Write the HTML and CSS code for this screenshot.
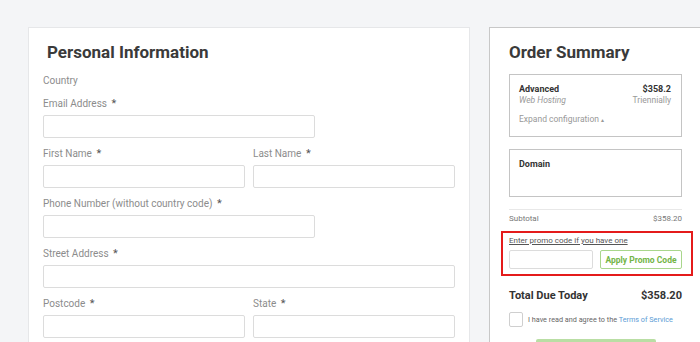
FILE: index.html
```html
<!DOCTYPE html>
<html lang="en">
<head>
  <meta charset="UTF-8">
  <meta name="viewport" content="width=device-width, initial-scale=1.0">
  <title>Checkout</title>
  <link rel="stylesheet" href="styles.css">
</head>
<body>
  <div class="checkout">
    <!-- Personal Information -->
    <section class="card personal">
      <h1>Personal Information</h1>

      <div class="field">
        <label>Country</label>
      </div>

      <div class="field wide">
        <label>Email Address <span class="req">*</span></label>
        <input type="text">
      </div>

      <div class="row">
        <div class="field">
          <label>First Name <span class="req">*</span></label>
          <input type="text">
        </div>
        <div class="field">
          <label>Last Name <span class="req">*</span></label>
          <input type="text">
        </div>
      </div>

      <div class="field wide">
        <label>Phone Number (without country code) <span class="req">*</span></label>
        <input type="text">
      </div>

      <div class="field">
        <label>Street Address <span class="req">*</span></label>
        <input type="text">
      </div>

      <div class="row">
        <div class="field">
          <label>Postcode <span class="req">*</span></label>
          <input type="text">
        </div>
        <div class="field">
          <label>State <span class="req">*</span></label>
          <input type="text">
        </div>
      </div>
    </section>

    <!-- Order Summary -->
    <aside class="card summary">
      <h1>Order Summary</h1>

      <div class="item">
        <div class="item-line">
          <span class="item-name">Advanced</span>
          <span class="item-price">$358.2</span>
        </div>
        <div class="item-line">
          <span class="item-group">Web Hosting</span>
          <span class="item-cycle">Triennially</span>
        </div>
        <div class="item-expand">Expand configuration <span class="caret">&#9652;</span></div>
      </div>

      <div class="item domain">
        <div class="item-name">Domain</div>
      </div>

      <div class="subtotal">
        <span>Subtotal</span>
        <span>$358.20</span>
      </div>

      <div class="promo">
        <a class="promo-link" href="#">Enter promo code if you have one</a>
        <div class="promo-form">
          <input type="text">
          <button class="promo-btn">Apply Promo Code</button>
        </div>
      </div>

      <div class="total">
        <span>Total Due Today</span>
        <span>$358.20</span>
      </div>

      <label class="agree">
        <span class="checkbox"></span>
        <span>I have read and agree to the <a href="#">Terms of Service</a></span>
      </label>

      <button class="checkout-btn"></button>
    </aside>
  </div>
</body>
</html>
```

FILE: styles.css
```css
body {
  font-family: Roboto, "Liberation Sans", Arial, sans-serif;
  background-color: #f4f5f7;
  margin: 0;
  padding: 0;
  color: #333;
  overflow: hidden;
}

.checkout {
  display: grid;
  grid-template-columns: 442px 213px;
  column-gap: 19px;
  align-items: start;
  padding: 27px 0 0 28px;
}

.card {
  background-color: white;
  border: 1px solid #e6e7e9;
  padding: 12px 14px 20px;
}

.card h1 {
  font-size: 17px;
  line-height: 24px;
  font-weight: bold;
  color: #3a3a3a;
  margin: 0 0 10px 4px;
}

/* form fields */
.field {
  margin-bottom: 9px;
}

.field label {
  display: block;
  font-size: 10px;
  line-height: 14px;
  color: #8c8c8c;
}

.req {
  color: #555;
  font-size: 11px;
  margin-left: 2px;
}

.field input {
  display: block;
  box-sizing: border-box;
  width: 100%;
  height: 23px;
  margin-top: 4px;
  border: 1px solid #dcdcdc;
  border-radius: 2px;
  background: white;
}

.field.wide input {
  width: 272px;
}

.row {
  display: grid;
  grid-template-columns: 202px 202px;
  column-gap: 8px;
}

/* order summary */
.summary {
  border-color: #c8c8c8;
  padding: 12px 19px 20px;
}

.summary h1 {
  margin-left: 0;
}

.item {
  border: 1px solid #c4c4c4;
  padding: 9px 10px 11px 9px;
  font-size: 8.5px;
  line-height: 11px;
}

.item-line {
  display: flex;
  justify-content: space-between;
}

.item-name,
.item-price {
  font-size: 9px;
  font-weight: bold;
  color: #333;
}

.item-group {
  font-style: italic;
  color: #999;
}

.item-cycle {
  color: #999;
}

.item-expand {
  margin-top: 8px;
  color: #999;
}

.caret {
  font-size: 6px;
}

.domain {
  margin-top: 12px;
  height: 48px;
  box-sizing: border-box;
}

.subtotal {
  display: flex;
  justify-content: space-between;
  margin-top: 12px;
  padding-top: 4px;
  border-top: 1px solid #e8e8e8;
  font-size: 8px;
  line-height: 10px;
  color: #777;
}

.promo {
  position: relative;
  margin-top: 12px;
}

/* highlight around the promo block */
.promo::after {
  content: "";
  position: absolute;
  top: -5px;
  left: -8px;
  right: -11px;
  bottom: -7px;
  border: 2px solid #e41b1b;
  pointer-events: none;
}

.promo-link {
  display: block;
  font-size: 8px;
  line-height: 10px;
  color: #555;
  text-decoration: underline;
}

.promo-form {
  display: flex;
  justify-content: space-between;
  margin-top: 4px;
}

.promo-form input {
  box-sizing: border-box;
  width: 84px;
  height: 19px;
  border: 1px solid #dcdcdc;
  border-radius: 2px;
}

.promo-btn {
  box-sizing: border-box;
  width: 82px;
  height: 19px;
  padding: 0;
  background: white;
  border: 1px solid #a9d68c;
  border-radius: 2px;
  color: #73b446;
  font-family: inherit;
  font-size: 8.5px;
  font-weight: bold;
}

.total {
  display: flex;
  justify-content: space-between;
  margin-top: 19px;
  font-size: 11px;
  line-height: 16px;
  font-weight: bold;
  color: #333;
}

.agree {
  display: flex;
  align-items: center;
  margin-top: 8px;
  font-size: 7.25px;
  color: #666;
}

.agree a {
  color: #5b9bd5;
  text-decoration: none;
}

.checkbox {
  box-sizing: border-box;
  width: 14px;
  height: 15px;
  margin-right: 5px;
  border: 1px solid #cfcfcf;
  border-radius: 2px;
  background: white;
}

.checkout-btn {
  display: block;
  width: 120px;
  height: 26px;
  margin: 12px auto 0;
  border: none;
  border-radius: 2px;
  background-color: #b9dea4;
}
```
